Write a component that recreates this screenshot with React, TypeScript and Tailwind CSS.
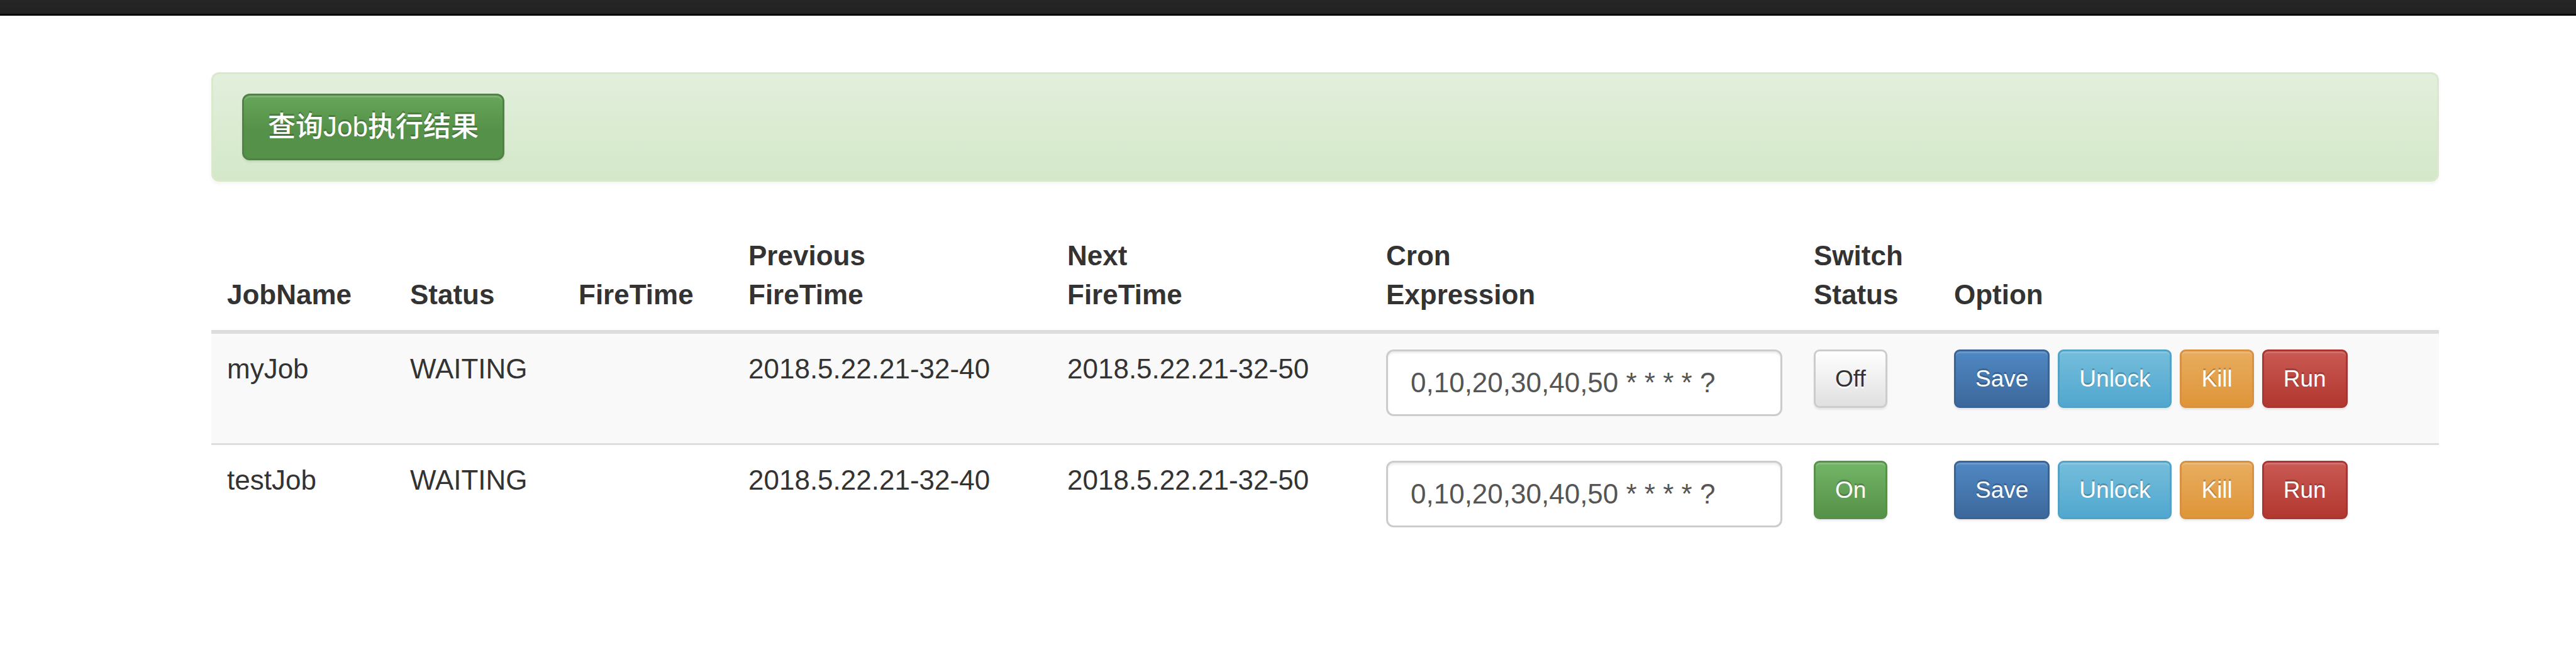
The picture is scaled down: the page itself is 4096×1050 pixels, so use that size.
const jobs = [
  { name: "myJob", status: "WAITING", fireTime: "", previous: "2018.5.22.21-32-40", next: "2018.5.22.21-32-50", cron: "0,10,20,30,40,50 * * * * ?", on: false },
  { name: "testJob", status: "WAITING", fireTime: "", previous: "2018.5.22.21-32-40", next: "2018.5.22.21-32-50", cron: "0,10,20,30,40,50 * * * * ?", on: true },
];

const smallButton =
  "rounded-[9px] border-[3px] px-[31px] py-4 text-[37px] leading-[55px]";
const raised =
  "text-white [text-shadow:0_-3px_0_rgba(0,0,0,0.2)] shadow-[inset_0_3px_0_rgba(255,255,255,0.15),0_3px_3px_rgba(0,0,0,0.075)]";

const tones = {
  off: "border-[#cccccc] bg-linear-to-b from-white to-[#e0e0e0] text-[#333333] [text-shadow:0_3px_0_#fff] shadow-[inset_0_3px_0_rgba(255,255,255,0.15),0_3px_3px_rgba(0,0,0,0.075)]",
  on: `border-[#57914a] bg-linear-to-b from-[#73b567] to-[#559148] ${raised}`,
  save: `border-[#3b6496] bg-linear-to-b from-[#5088c3] to-[#3c689b] ${raised}`,
  unlock: `border-[#51a2c4] bg-linear-to-b from-[#74bddb] to-[#50a7cf] ${raised}`,
  kill: `border-[#d89141] bg-linear-to-b from-[#e8ad5e] to-[#df9538] ${raised}`,
  run: `border-[#a93630] bg-linear-to-b from-[#ca5953] to-[#b1372f] ${raised}`,
};

function SmallButton({ tone, children }: { tone: keyof typeof tones; children: string }) {
  return (
    <button type="button" className={`${smallButton} ${tones[tone]}`}>
      {children}
    </button>
  );
}

const headCell = "border-b-[6px] border-[#dddddd] px-[25px] py-[25px] align-bottom font-bold";
const bodyCell = "px-[25px] pt-[25px] pb-[43px] align-top group-even:border-t-[3px] border-[#dddddd]";

export default function App() {
  return (
    <div className="min-h-screen bg-white font-['Liberation_Sans','Noto_Sans_CJK_SC',sans-serif] text-[44px] leading-[62px] text-[#333333]">
      <header className="h-[25px] border-b-[3px] border-[#080808] bg-linear-to-b from-[#262626] to-[#222222]" />
      <main className="pt-[90px] pr-[218px] pl-[336px]">
        <section className="mb-[62px] flex rounded-[12px] border-[3px] border-[#dae8cb] bg-linear-to-b from-[#e2efdc] to-[#d4e8c9] px-[46px] py-[31px] shadow-[inset_0_3px_0_rgba(255,255,255,0.05),0_3px_6px_rgba(0,0,0,0.05)]">
          <button
            type="button"
            className={`rounded-[12px] border-[3px] border-[#4f8244] bg-linear-to-b from-[#67a65a] to-[#559148] to-55% px-[38px] py-[19px] font-medium ${raised}`}
          >
            查询Job执行结果
          </button>
        </section>
        <table className="w-full table-fixed border-separate border-spacing-0 text-left">
          <colgroup>
            <col className="w-[291px]" />
            <col className="w-[268px]" />
            <col className="w-[270px]" />
            <col className="w-[507px]" />
            <col className="w-[507px]" />
            <col className="w-[680px]" />
            <col className="w-[223px]" />
            <col />
          </colgroup>
          <thead>
            <tr>
              <th scope="col" className={headCell}>JobName</th>
              <th scope="col" className={headCell}>Status</th>
              <th scope="col" className={headCell}>FireTime</th>
              <th scope="col" className={headCell}>Previous<br />FireTime</th>
              <th scope="col" className={headCell}>Next<br />FireTime</th>
              <th scope="col" className={headCell}>Cron<br />Expression</th>
              <th scope="col" className={headCell}>Switch<br />Status</th>
              <th scope="col" className={headCell}>Option</th>
            </tr>
          </thead>
          <tbody>
            {jobs.map((job) => (
              <tr key={job.name} className="group odd:bg-[#f9f9f9]">
                <td className={bodyCell}>{job.name}</td>
                <td className={bodyCell}>{job.status}</td>
                <td className={bodyCell}>{job.fireTime}</td>
                <td className={bodyCell}>{job.previous}</td>
                <td className={bodyCell}>{job.next}</td>
                <td className={bodyCell}>
                  <input
                    type="text"
                    aria-label={`Cron expression of ${job.name}`}
                    defaultValue={job.cron}
                    className="block h-[106px] w-full rounded-[12px] border-[3px] border-[#cccccc] bg-white px-9 text-[#555555] shadow-[inset_0_3px_3px_rgba(0,0,0,0.075)]"
                  />
                </td>
                <td className={bodyCell}>
                  <div className="flex">
                    <SmallButton tone={job.on ? "on" : "off"}>{job.on ? "On" : "Off"}</SmallButton>
                  </div>
                </td>
                <td className={bodyCell}>
                  <div className="flex gap-[13px]">
                    <SmallButton tone="save">Save</SmallButton>
                    <SmallButton tone="unlock">Unlock</SmallButton>
                    <SmallButton tone="kill">Kill</SmallButton>
                    <SmallButton tone="run">Run</SmallButton>
                  </div>
                </td>
              </tr>
            ))}
          </tbody>
        </table>
      </main>
    </div>
  );
}
